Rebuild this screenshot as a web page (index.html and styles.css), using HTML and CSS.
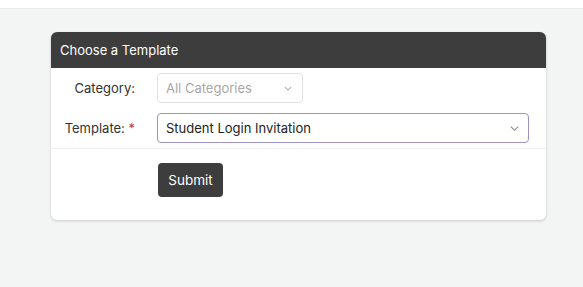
FILE: index.html
```html
<!DOCTYPE html>
<html>
<head>
<meta charset="utf-8">
<link rel="stylesheet" href="styles.css">
</head>
<body>
<div class="topbar"></div>
<main class="page">
  <section class="card">
    <header class="card-head">Choose a Template</header>
    <div class="form">
      <div class="row">
        <label class="label">Category:</label>
        <div class="select small disabled">
          <span>All Categories</span>
          <svg class="chev" width="8" height="5" viewBox="0 0 8 5"><path d="M0.8 0.8l3.2 3.2 3.2-3.2" fill="none" stroke="#b5b5b5" stroke-width="1.1"/></svg>
        </div>
      </div>
      <div class="row">
        <label class="label">Template: <span class="req">*</span></label>
        <div class="select wide active">
          <span>Student Login Invitation</span>
          <svg class="chev" width="9" height="5" viewBox="0 0 9 5"><path d="M0.8 0.6l3.7 3.6 3.7-3.6" fill="none" stroke="#909090" stroke-width="1.1"/></svg>
        </div>
      </div>
    </div>
    <div class="actions">
      <button class="btn">Submit</button>
    </div>
  </section>
</main>
</body>
</html>
```
FILE: styles.css
```css
* { box-sizing: border-box; }
html, body { margin: 0; padding: 0; }
body {
  background: #f3f5f5;
  font-family: Inter, "Noto Sans", sans-serif;
  font-size: 13px;
  color: #333;
  width: 583px;
  height: 287px;
  overflow: hidden;
}
.topbar {
  height: 9px;
  background: #fff;
  border-bottom: 1px solid #e9ebeb;
}
.page {
  padding: 23px 0 0 51px;
}
.card {
  width: 495px;
  background: #fff;
  border-radius: 6px;
  box-shadow: 0 1px 3px rgba(0,0,0,0.18);
  overflow: hidden;
}
.card-head {
  background: #3d3d3d;
  color: #fff;
  height: 36px;
  padding: 0 9px;
  display: flex;
  align-items: center;
  font-size: 13px;
}
.form {
  padding: 5px 17px 5px 0;
  display: flex;
  flex-direction: column;
  gap: 10px;
  border-bottom: 1px solid #f0f0f0;
}
.row {
  display: flex;
  align-items: center;
}
.label {
  width: 106px;
  text-align: right;
  padding-right: 22px;
  color: #333;
}
.req { color: #c0392b; }
.select {
  height: 30px;
  border: 1px solid #e0e0e0;
  border-radius: 4px;
  display: flex;
  align-items: center;
  justify-content: space-between;
  padding: 0 8px;
  background: #fff;
}
.select.small { width: 146px; padding-right: 10px; }
.select.wide { flex: 1; }
.select.disabled { color: #a8a8a8; }
.select.active {
  border-color: #9b93c9;
  color: #222;
  padding-right: 9px;
}
.chev { flex: none; }
.actions {
  padding: 14px 0 23px 107px;
}
.btn {
  background: #3d3d3d;
  color: #fff;
  border: none;
  border-radius: 4px;
  height: 34px;
  width: 65px;
  font-family: inherit;
  font-size: 13.5px;
}
```
